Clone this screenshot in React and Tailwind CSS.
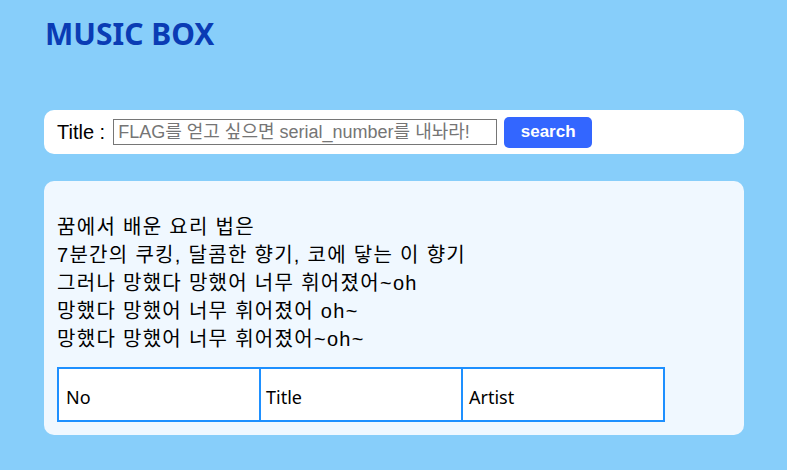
export default function App() {
  const lines = [
    "꿈에서 배운 요리 법은",
    "7분간의 쿠킹, 달콤한 향기, 코에 닿는 이 향기",
    "그러나 망했다 망했어 너무 휘어졌어~oh",
    "망했다 망했어 너무 휘어졌어 oh~",
    "망했다 망했어 너무 휘어졌어~oh~",
  ];
  return (
    <div className="min-h-[470px] w-full bg-[#87cefa] pl-[44px] pt-[13px]" style={{ fontFamily: '"Liberation Sans", "Noto Sans CJK KR", sans-serif' }}>
      <div className="w-[700px]">
        <h1 className="text-[30px] font-bold leading-[42px] text-[#0a3cb4] pl-[1px]" style={{ fontFamily: '"Noto Sans", "Noto Sans CJK KR", sans-serif' }}>MUSIC BOX</h1>
        <div className="mt-[55px] flex h-[44px] items-center rounded-[10px] bg-white pl-[13px]">
          <span className="text-[20px] text-black">Title :</span>
          <input
            className="ml-[8px] h-[26px] w-[384px] border border-[#767676] px-[4px] text-[18px] placeholder:text-[#757575] outline-none"
            placeholder="FLAG를 얻고 싶으면 serial_number를 내놔라!"
            style={{ fontFamily: '"Liberation Sans", "Noto Sans CJK KR", sans-serif' }}
          />
          <button className="ml-[7px] h-[31px] w-[88px] rounded-[5px] bg-[#3366ff] text-[17px] font-bold text-white">search</button>
        </div>
        <div className="mt-[27px] rounded-[10px] bg-[#f0f8ff] px-[13px] pt-[32px] pb-[13px]">
          <div className="text-[20px] leading-[28px] tracking-[1.3px] text-black" style={{ fontFamily: '"Liberation Sans", "Noto Sans CJK KR", sans-serif' }}>
            {lines.map((l, i) => (
              <div key={i}>{l}</div>
            ))}
          </div>
          <table className="mt-[14px] border-collapse bg-white" style={{ fontFamily: '"Noto Sans", "Noto Sans CJK KR", sans-serif' }}>
            <tbody>
              <tr>
                <td className="h-[53px] w-[202px] border-2 border-[#1e90ff] px-[7px] pt-[5px] text-[18px] text-black">No</td>
                <td className="h-[53px] w-[202px] border-2 border-[#1e90ff] px-[5px] pt-[5px] text-[18px] text-black">Title</td>
                <td className="h-[53px] w-[202px] border-2 border-[#1e90ff] px-[6px] pt-[5px] text-[18px] text-black">Artist</td>
              </tr>
            </tbody>
          </table>
        </div>
      </div>
    </div>
  );
}
